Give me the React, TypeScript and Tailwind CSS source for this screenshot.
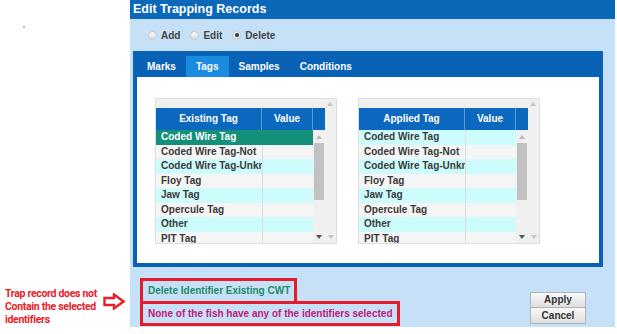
const tags = [
    'Coded Wire Tag',
    'Coded Wire Tag-Not',
    'Coded Wire Tag-Unknown',
    'Floy Tag',
    'Jaw Tag',
    'Opercule Tag',
    'Other',
    'PIT Tag',
];

function Tri({ down, color }: { down?: boolean; color: string }) {
    return (
        <svg width="6" height="4" viewBox="0 0 6 4" className="block">
            <polygon points={down ? '0,0 6,0 3,4' : '0,4 6,4 3,0'} fill={color} />
        </svg>
    );
}

function TagList({ title, selected }: { title: string; selected?: number }) {
    return (
        <div className="flex h-[146px] w-[182px] flex-col overflow-hidden border border-[#dedede] bg-[#f0f0f0]">
            <div className="flex h-[9px] items-center justify-end pr-[3px]">
                <Tri color="#c4c4c4" />
            </div>
            <div className="flex flex-1 overflow-hidden">
                <div className="flex w-[169px] flex-col">
                    <div className="flex h-[22px] bg-[#0b68bf] text-[10px] font-bold leading-[22px] text-white">
                        <div className="w-[106px] border-r border-[#5e98d6] text-center">{title}</div>
                        <div className="w-[51px] border-r border-[#5e98d6] text-center">Value</div>
                        <div className="flex-1" />
                    </div>
                    <div className="flex flex-1 overflow-hidden">
                        <div className="w-[157px]">
                            {tags.map((tag, i) => {
                                const isSel = i === selected;
                                const bg = isSel ? 'bg-[#148f7a] text-white' : i % 2 === 0 ? 'bg-[#cdfcfc] text-[#3a3a3a]' : 'bg-[#f5f5f5] text-[#3a3a3a]';
                                return (
                                    <div key={tag} className={`flex h-[14.5px] text-[10px] font-bold leading-[14.5px] ${bg}`}>
                                        <div className="w-[106px] overflow-hidden whitespace-nowrap pl-[5px]">{tag}</div>
                                        <div className={`w-[51px] border-l ${isSel ? 'border-[#148f7a]' : 'border-[#dcdcdc]'}`} />
                                    </div>
                                );
                            })}
                        </div>
                        <div className="flex w-[12px] flex-col items-center bg-[#f0f0f0]">
                            <div className="mt-[5px]">
                                <Tri color="#b8b8b8" />
                            </div>
                            <div className="mt-[4px] h-[57px] w-[10px] bg-[#c1c1c1]" />
                            <div className="mt-auto mb-[4px]">
                                <Tri down color="#555555" />
                            </div>
                        </div>
                    </div>
                </div>
                <div className="flex w-[13px] flex-col items-center justify-end pb-[4px]">
                    <Tri down color="#c4c4c4" />
                </div>
            </div>
        </div>
    );
}

function Radio({ label, checked }: { label: string; checked?: boolean }) {
    return (
        <label className="flex items-center gap-[4px]">
            <span className="flex h-[9px] w-[9px] items-center justify-center rounded-full border border-[#c8c8c8] bg-gradient-to-b from-[#fafafa] to-[#dcdcdc]">
                {checked && <span className="h-[4px] w-[4px] rounded-full bg-[#333]" />}
            </span>
            <span className="text-[10px] font-bold text-[#444]">{label}</span>
        </label>
    );
}

function App() {
    return (
        <div className="flex h-[334px] w-[617px] bg-white font-['Liberation_Sans',Arial,sans-serif]">
            <aside className="flex w-[130px] flex-col">
                <div className="ml-[23px] mt-[26px] h-[2px] w-[2px] bg-[#bbb]" />
                <div className="mt-auto mb-[8px] flex items-center pl-[5px]">
                    <p className="w-[98px] whitespace-nowrap font-['Roboto',sans-serif] text-[10.5px] font-bold leading-[13px] tracking-[-0.3px] text-[#e8202a]">
                        <span className="block">Trap record does not</span>
                        <span className="block">Contain the selected</span>
                        <span className="block">identifiers</span>
                    </p>
                    <svg width="22" height="17" viewBox="0 0 22 17" className="mb-[11px]">
                        <polygon points="1.5,5 11,5 11,1.5 20.5,8.5 11,15.5 11,12 1.5,12" fill="white" stroke="#e8202a" strokeWidth="2.4" strokeLinejoin="miter" />
                    </svg>
                </div>
            </aside>

            <section className="flex h-[327px] w-[485px] flex-col bg-[#c6e0f7]">
                <header className="h-[19px] bg-[#0b67b8] pl-[3px] text-[12.5px] font-bold leading-[18px] text-white">
                    Edit Trapping Records
                </header>

                <div className="flex h-[32px] items-center gap-[10px] pl-[18px]">
                    <Radio label="Add" />
                    <Radio label="Edit" />
                    <Radio label="Delete" checked />
                </div>

                <div className="ml-[3px] mr-[12px] flex h-[216px] flex-col border-[4px] border-[#0962b5]">
                    <nav className="flex h-[22px] items-end bg-[#0962b5] text-[10px] font-bold text-white">
                        <span className="flex h-[21px] items-center px-[10px]">Marks</span>
                        <span className="flex h-[21px] items-center bg-[#1b8be0] px-[10px]">Tags</span>
                        <span className="flex h-[21px] items-center px-[10px]">Samples</span>
                        <span className="flex h-[21px] items-center px-[10px]">Conditions</span>
                    </nav>
                    <div className="flex flex-1 items-start gap-[21px] bg-white pl-[18px] pt-[21px]">
                        <TagList title="Existing Tag" selected={0} />
                        <TagList title="Applied Tag" />
                    </div>
                </div>

                <div className="flex flex-1 items-start pl-[10px] pr-[29px] pt-[11px]">
                    <div className="flex flex-col">
                        <div className="w-[157px] border-[3px] border-b-0 border-[#e31b2a] pl-[5px] text-[10px] font-bold leading-[20px] text-[#1d8a6c]">
                            Delete Identifier Existing CWT
                        </div>
                        <div className="w-[260px] border-[3px] border-[#e31b2a] pl-[5px] text-[10px] font-bold leading-[19px] text-[#c4177a]">
                            None of the fish have any of the identifiers selected
                        </div>
                    </div>
                    <div className="ml-auto mt-[14px] flex w-[56px] flex-col">
                        <button type="button" className="h-[16px] border border-[#b4b4b4] bg-gradient-to-b from-[#f8f8f8] to-[#dedede] text-[10px] font-bold leading-[14px] text-[#333]">
                            Apply
                        </button>
                        <button type="button" className="h-[16px] border border-t-0 border-[#b4b4b4] bg-gradient-to-b from-[#f8f8f8] to-[#dedede] text-[10px] font-bold leading-[14px] text-[#333]">
                            Cancel
                        </button>
                    </div>
                </div>
            </section>
        </div>
    );
}

export default App;
